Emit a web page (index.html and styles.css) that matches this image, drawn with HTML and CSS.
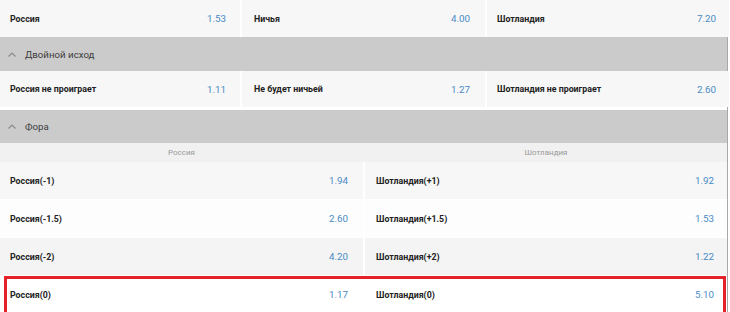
FILE: index.html
```html
<!DOCTYPE html>
<html lang="ru">
<head>
<meta charset="utf-8">
<link rel="stylesheet" href="styles.css">
</head>
<body>
<div class="page">
  <div class="grid3">
    <div class="cell"><span class="name">Россия</span><span class="odd">1.53</span></div>
    <div class="cell"><span class="name">Ничья</span><span class="odd">4.00</span></div>
    <div class="cell"><span class="name">Шотландия</span><span class="odd">7.20</span></div>
  </div>
  <div class="group-head">
    <svg class="chev" width="8" height="5" viewBox="0 0 8 5"><polyline points="0.5,4.5 4,1 7.5,4.5" fill="none" stroke="#8a8a8a" stroke-width="1.1"/></svg>
    <span>Двойной исход</span>
  </div>
  <div class="grid3 second">
    <div class="cell"><span class="name">Россия не проиграет</span><span class="odd">1.11</span></div>
    <div class="cell"><span class="name">Не будет ничьей</span><span class="odd">1.27</span></div>
    <div class="cell"><span class="name">Шотландия не проиграет</span><span class="odd">2.60</span></div>
  </div>
  <div class="group-head fora">
    <svg class="chev" width="8" height="5" viewBox="0 0 8 5"><polyline points="0.5,4.5 4,1 7.5,4.5" fill="none" stroke="#8a8a8a" stroke-width="1.1"/></svg>
    <span>Фора</span>
  </div>
  <div class="subhead">
    <span>Россия</span>
    <span>Шотландия</span>
  </div>
  <div class="grid2">
    <div class="cell r1"><span class="name">Россия(-1)</span><span class="odd">1.94</span></div>
    <div class="cell r1"><span class="name">Шотландия(+1)</span><span class="odd">1.92</span></div>
    <div class="cell r2"><span class="name">Россия(-1.5)</span><span class="odd">2.60</span></div>
    <div class="cell r2"><span class="name">Шотландия(+1.5)</span><span class="odd">1.53</span></div>
    <div class="cell r3"><span class="name">Россия(-2)</span><span class="odd">4.20</span></div>
    <div class="cell r3"><span class="name">Шотландия(+2)</span><span class="odd">1.22</span></div>
  </div>
  <div class="grid2 marked">
    <div class="cell r4"><span class="name">Россия(0)</span><span class="odd">1.17</span></div>
    <div class="cell r4"><span class="name">Шотландия(0)</span><span class="odd">5.10</span></div>
  </div>
</div>
</body>
</html>
```

FILE: styles.css
```css
* { box-sizing: border-box; }
html, body { margin: 0; padding: 0; background: #ffffff; }
body {
  font-family: Roboto, "Noto Sans", "Liberation Sans", sans-serif;
  width: 730px;
  height: 312px;
  overflow: hidden;
}
.page {
  width: 728px;
  border-right: 1px solid #a8a8a8;
  background: #ffffff;
  display: flex;
  flex-direction: column;
}
.grid3 {
  display: grid;
  grid-template-columns: 240px 243px 242px;
  column-gap: 2px;
  background: #ffffff;
}
.grid3 .cell { height: 37px; }
.grid3.second .cell { height: 36px; }
.grid3 .cell:first-child { padding-right: 14px; }
.grid3 .cell:nth-child(2) { padding-left: 12px; padding-right: 15px; }
.grid3 .cell:nth-child(3) { padding-left: 10px; padding-right: 13px; }
.cell {
  background: #f7f7f7;
  display: flex;
  align-items: center;
  justify-content: space-between;
  padding: 0 14px 0 10px;
}
.name {
  font-size: 8.8px;
  font-weight: 700;
  color: #222222;
}
.odd {
  font-size: 9.8px;
  color: #4a8bc4;
}
.group-head {
  height: 34px;
  background: #cbcbcb;
  display: flex;
  align-items: center;
  padding-left: 8px;
  gap: 9px;
  font-size: 9.7px;
  color: #3c3c3c;
}
.group-head.fora { margin-top: 3px; height: 33px; }
.chev { display: block; }
.subhead {
  height: 19px;
  background: #f1f1f1;
  display: grid;
  grid-template-columns: 363px 362px;
  column-gap: 2px;
  align-items: center;
  font-size: 8px;
  color: #9a9a9a;
  text-align: center;
}
.grid2 {
  display: grid;
  grid-template-columns: 363px 362px;
  column-gap: 2px;
  row-gap: 1px;
  background: #ffffff;
}
.grid2 .cell { height: 37px; padding-right: 15px; }
.grid2 .cell:nth-child(2n) { padding-left: 11px; padding-right: 13px; }
.r1 { background: #f7f7f7; }
.r2 { background: #fdfdfd; }
.r3 { background: #f4f4f4; }
.r4 { background: #ffffff; }
.grid2.marked {
  position: relative;
  margin-top: 1px;
}
.grid2.marked::after {
  content: "";
  position: absolute;
  left: 4px;
  top: 0;
  right: 1px;
  height: 34px;
  border: 3px solid #e3222b;
  pointer-events: none;
}
```
